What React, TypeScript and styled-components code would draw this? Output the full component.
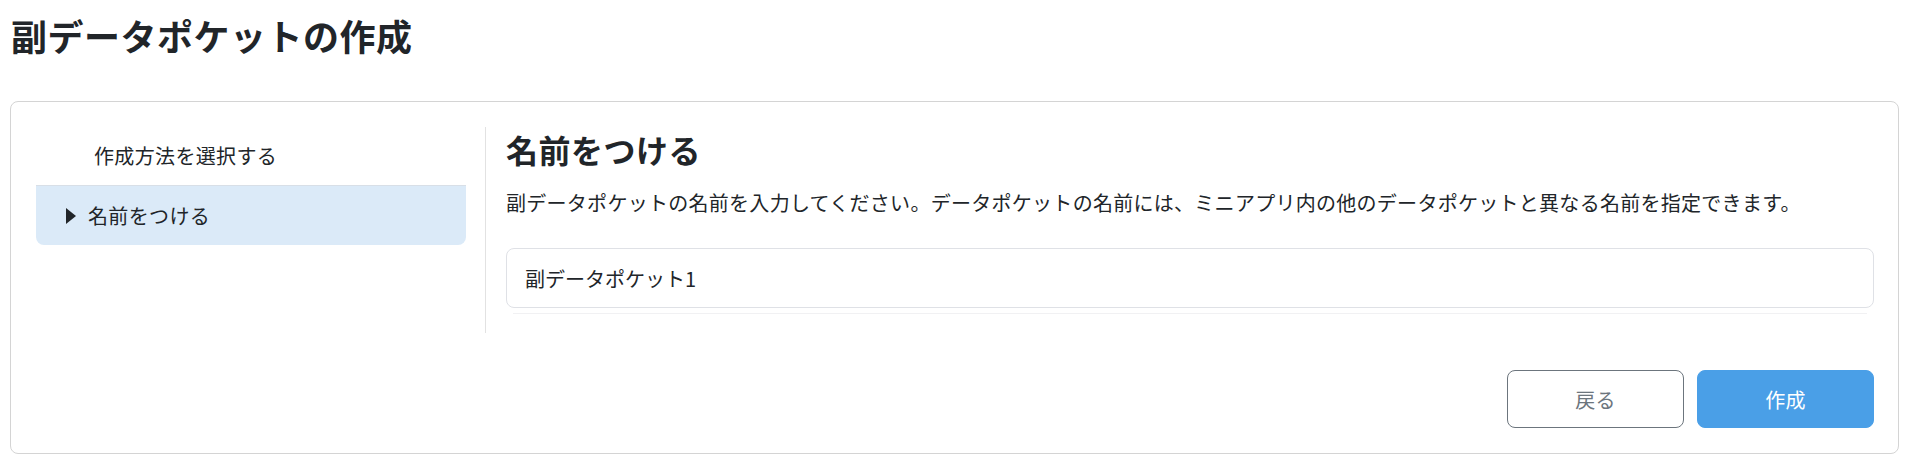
import React from "react";
import styled, { createGlobalStyle } from "styled-components";

const GlobalStyle = createGlobalStyle`
  html, body {
    margin: 0;
    padding: 0;
    background: #ffffff;
  }
  body {
    font-family: "Noto Sans CJK JP", "Noto Sans", sans-serif;
    color: #212529;
  }
  * { box-sizing: border-box; }
`;

const Page = styled.div`
  padding: 9px 11px 17px 10px;
`;

const Title = styled.h1`
  margin: 0 0 40px 1px;
  font-size: 36px;
  line-height: 52px;
  font-weight: 700;
  letter-spacing: 0.5px;
  color: #212529;
`;

const Card = styled.section`
  border: 1px solid #d4d4d4;
  border-radius: 8px;
  padding: 23px 24px 25px 25px;
  display: flex;
  flex-direction: column;
`;

const Body = styled.div`
  display: grid;
  grid-template-columns: 450px 1fr;
`;

const Sidebar = styled.nav`
  padding-right: 19px;
  border-right: 1px solid #e2e2e2;
  margin-top: 2px;
`;

const StepList = styled.ul`
  list-style: none;
  margin: 0;
  padding: 0;
`;

const StepItem = styled.li<{ $active?: boolean }>`
  height: 60px;
  display: flex;
  align-items: center;
  gap: 12px;
  font-size: 20px;
  line-height: 30px;
  letter-spacing: 0.35px;
  color: #212529;
  padding-left: ${(p) => (p.$active ? "30px" : "58px")};
  background: ${(p) => (p.$active ? "#dbeaf8" : "transparent")};
  border-top: ${(p) => (p.$active ? "1px solid #d8dfe7" : "1px solid transparent")};
  border-radius: ${(p) => (p.$active ? "0 0 8px 8px" : "8px 8px 0 0")};
  margin-top: ${(p) => (p.$active ? "0" : "-2px")};
`;

const Caret = styled.svg`
  width: 10px;
  height: 16px;
  flex: none;
  display: block;
`;

const Content = styled.div`
  padding-left: 20px;
  padding-bottom: 19px;
  display: flex;
  flex-direction: column;
`;

const Heading = styled.h2`
  margin: 2px 0 0;
  font-size: 32px;
  line-height: 44px;
  font-weight: 700;
  letter-spacing: 0.5px;
  color: #212529;
`;

const Description = styled.p`
  margin: 17px 0 0;
  font-size: 20px;
  line-height: 30px;
  letter-spacing: 0.28px;
  color: #212529;
`;

const NameInput = styled.input`
  margin-top: 30px;
  height: 60px;
  width: 100%;
  border: 1px solid #dfe1e6;
  border-radius: 8px;
  padding: 0 18px;
  font-family: "Noto Sans CJK JP", "Noto Sans", sans-serif;
  font-size: 20px;
  color: #212529;
  background: #ffffff;
  outline: none;
`;

const FaintRule = styled.div`
  margin: 5px 7px 0;
  height: 1px;
  background: #f1f1f3;
`;

const Actions = styled.div`
  margin-top: 37px;
  display: flex;
  justify-content: flex-end;
  gap: 13px;
`;

const Button = styled.button<{ $primary?: boolean }>`
  width: 177px;
  height: 58px;
  border-radius: 8px;
  font-family: "Noto Sans CJK JP", "Noto Sans", sans-serif;
  font-size: 20px;
  letter-spacing: 0.3px;
  cursor: pointer;
  border: 1px solid ${(p) => (p.$primary ? "#4a9fe7" : "#6c757d")};
  background: ${(p) => (p.$primary ? "#4a9fe7" : "#ffffff")};
  color: ${(p) => (p.$primary ? "#ffffff" : "#6c757d")};
`;

export default function App() {
  return (
    <>
      <GlobalStyle />
      <Page>
        <Title>副データポケットの作成</Title>
        <Card>
          <Body>
            <Sidebar>
              <StepList>
                <StepItem>作成方法を選択する</StepItem>
                <StepItem $active>
                  <Caret viewBox="0 0 10 16">
                    <polygon points="0,0 10,8 0,16" fill="#212529" />
                  </Caret>
                  名前をつける
                </StepItem>
              </StepList>
            </Sidebar>
            <Content>
              <Heading>名前をつける</Heading>
              <Description>
                副データポケットの名前を入力してください。データポケットの名前には、ミニアプリ内の他のデータポケットと異なる名前を指定できます。
              </Description>
              <NameInput defaultValue="副データポケット1" />
              <FaintRule />
            </Content>
          </Body>
          <Actions>
            <Button>戻る</Button>
            <Button $primary>作成</Button>
          </Actions>
        </Card>
      </Page>
    </>
  );
}
